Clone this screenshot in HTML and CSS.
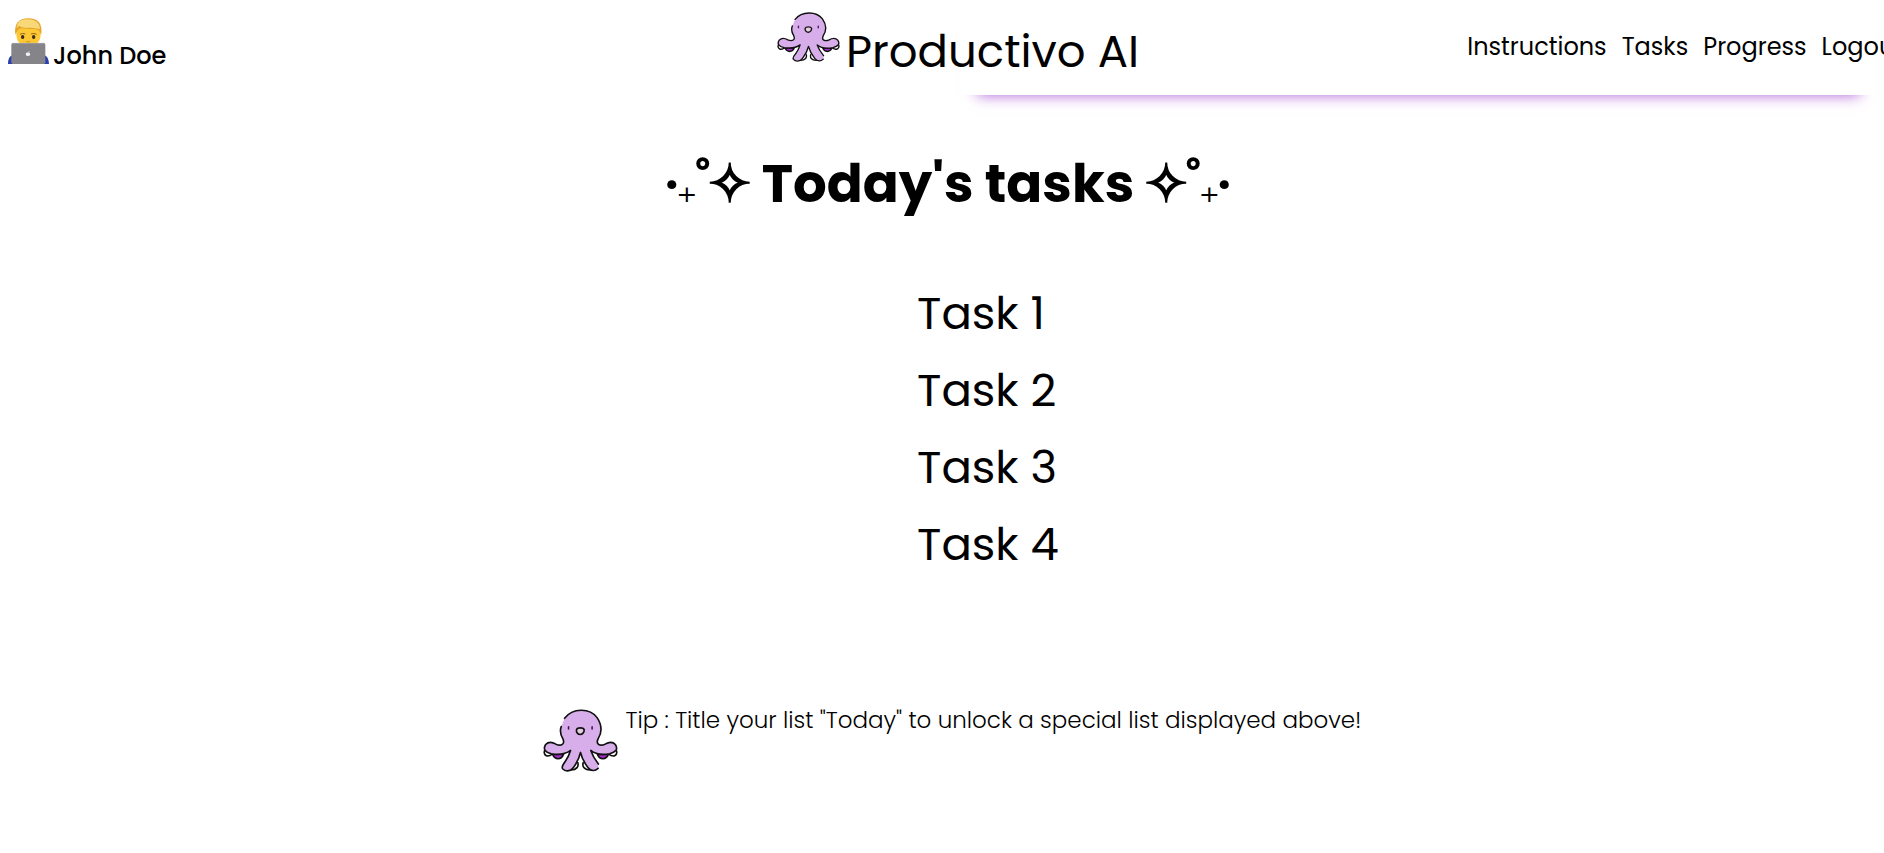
FILE: index.html
```html
<!DOCTYPE html>
<html lang="en">
<head>
<meta charset="utf-8">
<title>Productivo AI</title>
<link rel="stylesheet" href="styles.css">
</head>
<body>
<svg class="sprite" aria-hidden="true">
  <symbol id="octopus" viewBox="43 41 226 190" preserveAspectRatio="none">
    <g stroke="#111" stroke-width="5" stroke-linecap="round" stroke-linejoin="round">
      <path fill="#fff" d="M48 166C43 180 56 188 70 178M264 166C269 180 256 188 242 178M148 203C151 214 145 224 128 225M164 203C161 214 166 224 184 225"/>
      <path fill="#a92bd0" d="M72 178C79 195 97 196 105 178ZM240 178C233 195 215 196 207 178Z"/>
      <path fill="#d8aeea" stroke="none" d="M108 69C132 37 184 37 206 67C220 88 222 110 209 131C201 148 215 154 230 147C240 141 251 137 261 148C271 164 260 172 244 176C222 180 201 178 187 166C192 181 199 193 209 206L210 220C200 229 188 229 179 218C168 204 160 190 156 172C152 190 145 204 134 218C125 230 110 230 102 221C98 214 104 207 109 201C117 190 122 179 126 166C110 178 90 180 68 176C50 172 42 162 51 148C61 137 72 141 82 147C98 154 110 147 103 131C94 116 94 105 98 94Z"/>
      <path fill="none" d="M108 69C132 37 184 37 206 67C220 88 222 110 209 131C201 148 215 154 230 147C240 141 251 137 261 148C271 164 260 172 244 176C222 180 201 178 187 166C192 181 199 193 210 207M209 220C200 229 188 229 179 218C168 204 160 190 156 172C152 190 145 204 134 218C125 230 110 230 102 221C98 214 104 207 109 201C117 190 122 179 126 166C110 178 90 180 68 176C50 172 42 162 51 148C61 137 72 141 82 147C98 154 110 147 103 131C94 116 94 105 98 94"/>
      <path fill="#e4cfe0" d="M144 103C147 96 164 96 167 103C168 112 161 118 155 118C149 118 142 112 144 103Z"/>
      <path stroke="#4a1a60" d="M120 95V101M191 95V101"/>
    </g>
  </symbol>
</svg>

<header class="header">
  <div class="user">
    <svg class="avatar" viewBox="25 26 123 138" aria-hidden="true">
      <path fill="#2a3fae" d="M25 164C25 148 31 138 42 138H131C141 138 147 148 148 164Z"/>
      <path fill="#fcc935" d="M50 67C50 38 65 30 86 30C108 30 123 40 123 67V75C123 101 104 113 86 113C68 113 50 101 50 75Z"/>
      <path fill="#e6a52d" d="M47 76C43 43 57 27 86 27C116 27 129 43 125 76L119 65C113 56 94 61 79 58C69 56 60 54 53 65Z"/>
      <path fill="#f8d878" d="M51 57C52 34 67 29 88 30C108 31 120 41 121 60C103 51 73 61 58 49Z"/>
      <path stroke="#976320" stroke-width="3" fill="none" d="M61 75Q69 70 77 74M94 74Q103 70 111 75"/>
      <ellipse cx="69" cy="83" rx="5" ry="6" fill="#3d281d"/>
      <ellipse cx="102" cy="83" rx="5" ry="6" fill="#3d281d"/>
      <path stroke="#cf8f23" stroke-width="3" fill="none" d="M80 96Q86 100 92 96"/>
      <rect x="35" y="101" width="102" height="63" rx="5" fill="#858589"/>
      <path stroke="#a9a9ad" stroke-width="2" d="M38 102H134"/>
      <path fill="#f4f4f4" d="M86 129Q87 125 90 125Q89 129 86 129ZM85 130C80 128 77 132 79 136C81 141 83 140 86 139C89 140 91 139 92 136Q89 134 91 131Q89 129 85 130Z"/>
    </svg>
    <span class="user-name">John Doe</span>
  </div>
  <div class="brand">
    <svg class="brand-logo" aria-hidden="true"><use href="#octopus"/></svg>
    <span class="brand-name">Productivo AI</span>
  </div>
  <nav class="nav">
    <a href="#instructions">Instructions</a>
    <a href="#tasks">Tasks</a>
    <a href="#progress">Progress</a>
    <a href="#logout">Logout</a>
  </nav>
</header>

<main class="main">
  <h1 class="title">
    <span class="sparkle"><span class="dot">·</span><span class="plus">₊</span><span class="ring">˚</span><span class="star">✧</span></span>
    <span>Today's tasks</span>
    <span class="sparkle"><span class="star">✧</span><span class="ring">˚</span><span class="plus">₊</span><span class="dot">·</span></span>
  </h1>
  <ul class="tasks">
    <li>Task 1</li>
    <li>Task 2</li>
    <li>Task 3</li>
    <li>Task 4</li>
  </ul>
  <div class="tip">
    <svg class="tip-logo" aria-hidden="true"><use href="#octopus"/></svg>
    <p class="tip-text">Tip : Title your list "Today" to unlock a special list displayed above!</p>
  </div>
</main>
</body>
</html>
```
FILE: styles.css
```css
* {
  box-sizing: border-box;
}

body {
  margin: 0;
  overflow-x: hidden;
  background: #fff;
  color: #000;
  font-family: Poppins, Inter, "Noto Sans", sans-serif;
  font-size: 24px;
  line-height: 36px;
}

.sprite {
  display: none;
}

.header {
  position: relative;
  display: grid;
  grid-template-columns: 1fr auto 1fr;
  height: 95px;
  padding-left: 8px;
}

/* soft violet edge below the right half of the bar */
.header::after {
  content: "";
  position: absolute;
  z-index: -1;
  inset: 0 8px 0 51%;
  box-shadow: 0 16px 14px -16px #b060d8;
}

.user {
  display: flex;
  align-items: flex-start;
  gap: 4px;
  padding-top: 18px;
}

.avatar {
  width: 41px;
  height: 46px;
}

.user-name {
  padding-top: 20px;
  font-weight: 500;
}

.brand {
  display: flex;
  align-items: flex-start;
  gap: 6px;
  margin-left: 24px;
  padding-top: 12px;
}

.brand-logo {
  width: 63px;
  height: 50px;
}

.brand-name {
  padding-top: 8px;
  font-size: 45px;
  line-height: 64px;
}

.nav {
  display: flex;
  justify-content: flex-end;
  gap: 15px;
  margin-right: -19px;
  padding-top: 29px;
}

.nav a {
  color: inherit;
  text-decoration: none;
}

.title {
  display: flex;
  justify-content: center;
  align-items: baseline;
  gap: 12px;
  margin: 50px 0 0;
  padding-left: 12px;
  font-size: 53px;
  line-height: 78px;
  font-weight: 700;
}

.sparkle {
  display: flex;
  align-items: baseline;
  line-height: 1;
}

.sparkle span {
  display: flex;
  justify-content: center;
}

.sparkle .dot {
  width: 12px;
  font-weight: 600;
}

.sparkle .plus {
  width: 18px;
  font-family: "DejaVu Sans", sans-serif;
  font-size: 40px;
  font-weight: 400;
}

.sparkle .ring {
  width: 14px;
}

.sparkle .star {
  width: 40px;
  font-family: "DejaVu Sans", sans-serif;
  -webkit-text-stroke: 2px #000;
}

.tasks {
  width: max-content;
  margin: 52px auto 0;
  padding: 0 0 0 92px;
  list-style: none;
  font-size: 45px;
  line-height: 77px;
}

.tip {
  display: flex;
  justify-content: center;
  gap: 8px;
  margin-top: 126px;
  padding-left: 20px;
}

.tip-logo {
  flex: none;
  width: 75px;
  height: 63px;
}

.tip-text {
  margin: -7px 0 0;
  font-size: 23px;
  font-weight: 300;
}
```
